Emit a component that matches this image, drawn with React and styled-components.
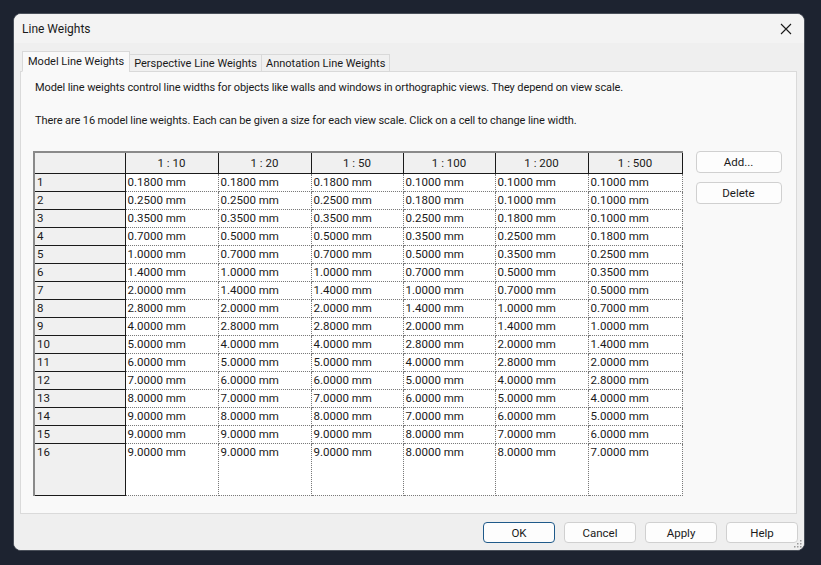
import React from "react";
import styled, { createGlobalStyle } from "styled-components";

const GlobalStyle = createGlobalStyle`
  html, body {
    margin: 0;
    padding: 0;
    background: #1d2330;
    font-family: Roboto, "Noto Sans", sans-serif;
    font-size: 11px;
    color: #000;
  }
`;

const scales = ["1 : 10", "1 : 20", "1 : 50", "1 : 100", "1 : 200", "1 : 500"];
const colWidths = [93, 93, 92, 92, 93, 94];

const rows = [
  ["0.1800", "0.1800", "0.1800", "0.1000", "0.1000", "0.1000"],
  ["0.2500", "0.2500", "0.2500", "0.1800", "0.1000", "0.1000"],
  ["0.3500", "0.3500", "0.3500", "0.2500", "0.1800", "0.1000"],
  ["0.7000", "0.5000", "0.5000", "0.3500", "0.2500", "0.1800"],
  ["1.0000", "0.7000", "0.7000", "0.5000", "0.3500", "0.2500"],
  ["1.4000", "1.0000", "1.0000", "0.7000", "0.5000", "0.3500"],
  ["2.0000", "1.4000", "1.4000", "1.0000", "0.7000", "0.5000"],
  ["2.8000", "2.0000", "2.0000", "1.4000", "1.0000", "0.7000"],
  ["4.0000", "2.8000", "2.8000", "2.0000", "1.4000", "1.0000"],
  ["5.0000", "4.0000", "4.0000", "2.8000", "2.0000", "1.4000"],
  ["6.0000", "5.0000", "5.0000", "4.0000", "2.8000", "2.0000"],
  ["7.0000", "6.0000", "6.0000", "5.0000", "4.0000", "2.8000"],
  ["8.0000", "7.0000", "7.0000", "6.0000", "5.0000", "4.0000"],
  ["9.0000", "8.0000", "8.0000", "7.0000", "6.0000", "5.0000"],
  ["9.0000", "9.0000", "9.0000", "8.0000", "7.0000", "6.0000"],
  ["9.0000", "9.0000", "9.0000", "8.0000", "8.0000", "7.0000"],
];

export default function App() {
  return (
    <React.Fragment>
      <GlobalStyle />
      <Screen>
        <Dialog>
          <TitleBar>
            <Title>Line Weights</Title>
            <CloseButton>
              <svg width="12" height="12" viewBox="0 0 12 12">
                <path d="M1 1 L11 11 M11 1 L1 11" stroke="#1a1a1a" strokeWidth="1.1" fill="none" />
              </svg>
            </CloseButton>
          </TitleBar>
          <Body>
            <TabStrip>
              <Tab active>Model Line Weights</Tab>
              <Tab>Perspective Line Weights</Tab>
              <Tab>Annotation Line Weights</Tab>
            </TabStrip>
            <Panel>
              <Intro>
                Model line weights control line widths for objects like walls and windows in orthographic views. They depend on view scale.
              </Intro>
              <Intro>
                There are 16 model line weights. Each can be given a size for each view scale. Click on a cell to change line width.
              </Intro>
              <GridArea>
                <Table>
                  <colgroup>
                    <col style={{ width: 91 }} />
                    {colWidths.map((w, i) => (
                      <col key={i} style={{ width: w }} />
                    ))}
                  </colgroup>
                  <thead>
                    <tr>
                      <Corner />
                      {scales.map((s) => (
                        <HeadCell key={s}>{s}</HeadCell>
                      ))}
                    </tr>
                  </thead>
                  <tbody>
                    {rows.map((r, i) => (
                      <BodyRow key={i} last={i === rows.length - 1}>
                        <RowHead>{i + 1}</RowHead>
                        {r.map((v, j) => (
                          <Cell key={j}>{v} mm</Cell>
                        ))}
                      </BodyRow>
                    ))}
                  </tbody>
                </Table>
                <SideButtons>
                  <Button>Add...</Button>
                  <Button>Delete</Button>
                </SideButtons>
              </GridArea>
            </Panel>
            <Footer>
              <Button wide primary>OK</Button>
              <Button wide>Cancel</Button>
              <Button wide>Apply</Button>
              <Button wide>Help</Button>
            </Footer>
          </Body>
          <Grip>
            <svg width="10" height="10" viewBox="0 0 10 10">
              <g fill="#9a9a9a">
                <rect x="7" y="1" width="1.5" height="1.5" />
                <rect x="4" y="4" width="1.5" height="1.5" />
                <rect x="7" y="4" width="1.5" height="1.5" />
                <rect x="1" y="7" width="1.5" height="1.5" />
                <rect x="4" y="7" width="1.5" height="1.5" />
                <rect x="7" y="7" width="1.5" height="1.5" />
              </g>
            </svg>
          </Grip>
        </Dialog>
      </Screen>
    </React.Fragment>
  );
}

const Screen = styled.div`
  width: 821px;
  height: 565px;
  padding: 13px 0 0 13px;
  box-sizing: border-box;
  background: #1d2330;
`;

const Dialog = styled.div`
  position: relative;
  width: 792px;
  height: 538px;
  box-sizing: border-box;
  background: #f0f0f0;
  border: 1px solid #4a505a;
  border-radius: 8px;
  overflow: hidden;
  display: flex;
  flex-direction: column;
`;

const TitleBar = styled.div`
  height: 29px;
  display: flex;
  align-items: center;
  justify-content: space-between;
  padding: 0 0 0 8px;
  background: #f3f3f3;
`;

const Title = styled.div`
  font-size: 12px;
  color: #1a1a1a;
  padding-top: 1px;
`;

const CloseButton = styled.div`
  width: 46px;
  height: 29px;
  display: flex;
  align-items: center;
  justify-content: center;
  margin-right: -5px;
`;

const Body = styled.div`
  flex: 1;
  display: flex;
  flex-direction: column;
  padding: 7px 7px 0 6px;
  background: #efefef;
`;

const TabStrip = styled.div`
  display: flex;
  align-items: flex-end;
  padding-left: 2px;
  height: 21px;
  position: relative;
  z-index: 1;
`;

const Tab = styled.div`
  height: ${(p) => (p.active ? "21px" : "18px")};
  box-sizing: border-box;
  padding: ${(p) => (p.active ? "2px 5px 0 5px" : "1px 4px 0 4px")};
  background: ${(p) => (p.active ? "#f9f9f9" : "#f0f0f0")};
  border: 1px solid #d9d9d9;
  border-bottom: ${(p) => (p.active ? "1px solid #f9f9f9" : "1px solid #d9d9d9")};
  margin-left: ${(p) => (p.active ? "0" : "-1px")};
  margin-bottom: -1px;
  font-size: 11px;
  line-height: 15px;
  color: #1a1a1a;
  white-space: nowrap;
`;

const Panel = styled.div`
  height: 443px;
  box-sizing: border-box;
  background: #f9f9f9;
  border: 1px solid #dadada;
  padding: 7px 0 0 14px;
`;

const Intro = styled.div`
  font-size: 11px;
  letter-spacing: -0.1px;
  line-height: 17px;
  color: #1a1a1a;
  margin-bottom: 16px;
  white-space: nowrap;
`;

const GridArea = styled.div`
  display: flex;
  align-items: flex-start;
  margin-top: 22px;
  margin-left: -2px;
`;

const Table = styled.table`
  border-collapse: collapse;
  table-layout: fixed;
  width: 649px;
  border-top: 2px solid #8a8a8a;
  border-left: 2px solid #8a8a8a;
  font-size: 11.5px;
  color: #1a1a1a;
`;

const Corner = styled.th`
  height: 20px;
  padding: 0;
  background: #f0f0f0;
  border-right: 1px solid #1a1a1a;
  border-bottom: 1px solid #1a1a1a;
`;

const HeadCell = styled.th`
  height: 20px;
  padding: 0;
  font-weight: normal;
  text-align: center;
  background: #f0f0f0;
  border-right: 1px solid #1a1a1a;
  border-bottom: 1px solid #1a1a1a;
`;

const BodyRow = styled.tr`
  height: ${(p) => (p.last ? "52px" : "18px")};
  & > td {
    vertical-align: top;
  }
`;

const RowHead = styled.td`
  padding: 0 0 0 2px;
  background: #f0f0f0;
  border-right: 1px solid #1a1a1a;
  border-bottom: 1px solid #1a1a1a;
  line-height: 17px;
`;

const Cell = styled.td`
  padding: 0 0 0 2px;
  background: #fff;
  border-right: 1px dotted #7a7a7a;
  border-bottom: 1px dotted #7a7a7a;
  line-height: 17px;
  white-space: nowrap;
  overflow: hidden;
`;

const SideButtons = styled.div`
  display: flex;
  flex-direction: column;
  gap: 9px;
  margin-left: 13px;
`;

const Button = styled.div`
  width: ${(p) => (p.wide ? "72px" : "86px")};
  height: ${(p) => (p.wide ? "21px" : "22px")};
  box-sizing: border-box;
  display: flex;
  align-items: center;
  justify-content: center;
  background: #fdfdfd;
  border: 1px solid ${(p) => (p.primary ? "#1f5a8a" : "#d0d0d0")};
  border-radius: 4px;
  font-size: 11.5px;
  color: #1a1a1a;
`;

const Footer = styled.div`
  display: flex;
  justify-content: flex-end;
  gap: 9px;
  padding-top: 8px;
  margin-right: -1px;
`;

const Grip = styled.div`
  position: absolute;
  right: 1px;
  bottom: 1px;
  line-height: 0;
`;
